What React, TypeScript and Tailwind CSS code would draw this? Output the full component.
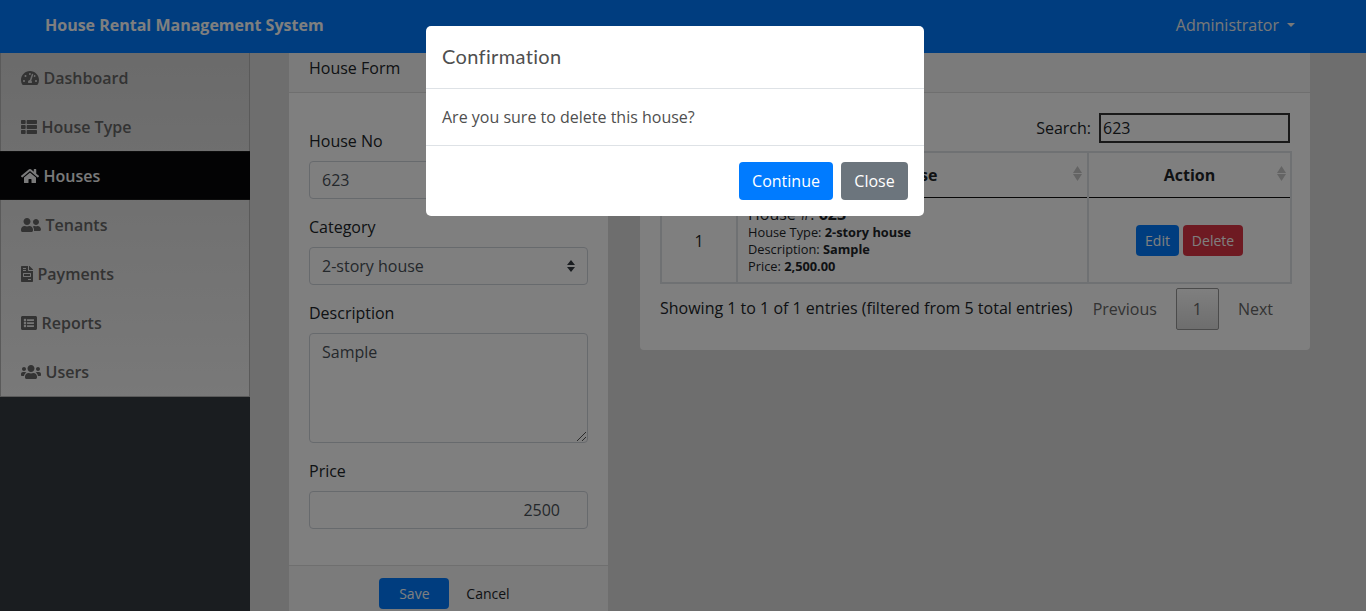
import { FaTachometerAlt, FaThList, FaHome, FaUserFriends, FaFileInvoice, FaListAlt, FaUsers } from 'react-icons/fa';

const menuItems = [
  { icon: FaTachometerAlt, label: 'Dashboard', size: 'h-[16px] w-[18px]', active: false },
  { icon: FaThList, label: 'House Type', size: 'h-[16px] w-[16px]', active: false },
  { icon: FaHome, label: 'Houses', size: 'h-[16px] w-[18px]', active: true },
  { icon: FaUserFriends, label: 'Tenants', size: 'h-[16px] w-[20px]', active: false },
  { icon: FaFileInvoice, label: 'Payments', size: 'h-[16px] w-[12px]', active: false },
  { icon: FaListAlt, label: 'Reports', size: 'h-[16px] w-[16px]', active: false },
  { icon: FaUsers, label: 'Users', size: 'h-[16px] w-[20px]', active: false },
];

function SortIcon() {
  return (
    <span className="flex flex-col items-center text-[#c8c8c8] leading-none">
      <svg width="9" height="7" viewBox="0 0 9 7"><path d="M4.5 0L9 7H0z" fill="currentColor" /></svg>
      <svg width="9" height="7" viewBox="0 0 9 7" className="mt-[1px]"><path d="M4.5 7L0 0h9z" fill="currentColor" /></svg>
    </span>
  );
}

export default function App() {
  return (
    <div className="relative h-[611px] overflow-hidden bg-[#dcdcdc] font-['Open_Sans',sans-serif] text-[16px] text-[#212529]">
      {/* Navbar */}
      <nav className="flex h-[53px] items-center justify-between bg-[#007bff] pb-[4px] pl-[45px] pr-[71px] text-white">
        <span className="font-bold">House Rental Management System</span>
        <span className="flex items-center gap-[8px] text-[16px] text-[#f0f0f0]">
          Administrator
          <span className="h-0 w-0 border-x-[4.8px] border-t-[4.8px] border-x-transparent border-t-[#f0f0f0]" />
        </span>
      </nav>

      <div className="flex h-[558px]">
        {/* Sidebar */}
        <aside className="w-[250px] shrink-0 bg-[#343a40]">
          <ul className="border-b border-[#b4b4b4] bg-gradient-to-b from-[#d6d6d6] to-[#f2f2f2]">
            {menuItems.map((item) => {
              const Icon = item.icon;
              return (
                <li
                  key={item.label}
                  className={
                    item.active
                      ? 'flex h-[49px] items-center gap-[4.5px] border-y border-[#1a1a1a] bg-[#060709] pl-[21px] font-semibold text-[#f4f4f4]'
                      : 'flex h-[49px] items-center gap-[4.5px] border-x border-[#b4b4b4] pl-[20px] font-semibold text-[#666]'
                  }
                >
                  <Icon className={item.size} />
                  <span>{item.label}</span>
                </li>
              );
            })}
          </ul>
        </aside>

        {/* Main */}
        <main className="flex flex-1 items-start gap-[32px] pl-[39px]">
          {/* Form card */}
          <div className="flex w-[319px] flex-col rounded-b bg-white">
            <div className="border-b border-[#dfdfdf] bg-[#f7f7f7] px-[20px] pb-[12px] pt-[3px]">House Form</div>
            <div className="flex flex-col px-[20px] pt-[36px] pb-[36px]">
              <label className="mb-[8px]">House No</label>
              <div className="mb-[16px] flex h-[38px] items-center rounded border border-[#ced4da] px-[12px] text-[#495057]">623</div>
              <label className="mb-[8px]">Category</label>
              <div className="mb-[16px] flex h-[38px] items-center justify-between rounded border border-[#ced4da] px-[12px] text-[#495057]">
                2-story house
                <svg width="8" height="12" viewBox="0 0 8 12"><path d="M4 0l4 5H0zM4 12L0 7h8z" fill="#343a40" /></svg>
              </div>
              <label className="mb-[8px]">Description</label>
              <div className="relative mb-[16px] h-[110px] rounded border border-[#ced4da] px-[12px] py-[6px] text-[#495057]">
                Sample
                <svg width="10" height="10" viewBox="0 0 10 10" className="absolute bottom-[1px] right-[1px]">
                  <path d="M1 10L10 1M6 10l4-4" stroke="#555" strokeWidth="1" fill="none" />
                </svg>
              </div>
              <label className="mb-[8px]">Price</label>
              <div className="flex h-[38px] items-center justify-end rounded border border-[#ced4da] pr-[27px] text-[#495057]">2500</div>
            </div>
            <div className="flex items-start justify-center gap-[17px] border-t border-[#dfdfdf] bg-[#f7f7f7] py-[12px] text-[14px]">
              <span className="flex h-[31px] w-[70px] items-center justify-center rounded bg-[#007bff] text-white">Save</span>
              <span className="flex h-[31px] items-center pr-[8px] text-[#212529]">Cancel</span>
            </div>
          </div>

          {/* List card */}
          <div className="flex w-[670px] flex-col rounded-b bg-white">
            <div className="h-[40px] border-b border-[#dfdfdf] bg-[#f7f7f7]" />
            <div className="flex flex-col px-[20px] pb-[20px] pt-[20px]">
              <div className="mb-[8px] flex h-[30px] items-center justify-end gap-[8px]">
                <span>Search:</span>
                <div className="flex h-[30px] w-[191px] items-center border-2 border-[#333] px-[2px] text-[#212529]">623</div>
              </div>
              <table className="w-[632px] table-fixed border-collapse border-2 border-[#dee2e6]">
                <thead>
                  <tr className="h-[45px] border-b border-[#111]">
                    <th className="w-[76px] border-x-2 border-[#dee2e6]">#</th>
                    <th className="w-[351px] border-x-2 border-[#dee2e6]">
                      <div className="relative flex justify-center">
                        House
                        <span className="absolute right-[5px] top-[3px]"><SortIcon /></span>
                      </div>
                    </th>
                    <th className="border-x-2 border-[#dee2e6]">
                      <div className="relative flex justify-center">
                        Action
                        <span className="absolute right-[4px] top-[3px]"><SortIcon /></span>
                      </div>
                    </th>
                  </tr>
                </thead>
                <tbody>
                  <tr className="h-[86px] border-b border-[#111]">
                    <td className="border-x-2 border-[#dee2e6] pt-[2px] text-center">1</td>
                    <td className="border-x-2 border-[#dee2e6] pl-[10px] align-middle">
                      <p className="leading-[20px]">House #: <b>623</b></p>
                      <p className="text-[12.8px] leading-[17px]">House Type: <b>2-story house</b></p>
                      <p className="text-[12.8px] leading-[17px]">Description: <b>Sample</b></p>
                      <p className="text-[12.8px] leading-[17px]">Price: <b>2,500.00</b></p>
                    </td>
                    <td className="border-x-2 border-[#dee2e6] pt-[2px]">
                      <div className="flex justify-center gap-[4px] text-[14px] text-white">
                        <span className="flex h-[31px] w-[43px] items-center justify-center rounded bg-[#007bff]">Edit</span>
                        <span className="flex h-[31px] w-[60px] items-center justify-center rounded bg-[#dc3545]">Delete</span>
                      </div>
                    </td>
                  </tr>
                </tbody>
              </table>
              <div className="mt-[4px] flex items-center justify-between">
                <span className="mb-[2px]">Showing 1 to 1 of 1 entries (filtered from 5 total entries)</span>
                <div className="flex items-center text-[#666]">
                  <span className="px-[19px]">Previous</span>
                  <span className="flex h-[42px] w-[43px] items-center justify-center rounded-[2px] border border-[#979797] bg-gradient-to-b from-white to-[#dcdcdc]">1</span>
                  <span className="pl-[19px] pr-[17px]">Next</span>
                </div>
              </div>
            </div>
          </div>
        </main>
      </div>

      {/* Backdrop and modal */}
      <div className="absolute inset-0 bg-black/50" />
      <div className="absolute left-[426px] top-[26px] w-[498px] rounded-[5px] bg-white text-[#4f4f4f]">
        <div className="flex h-[63px] items-center border-b border-[#dee2e6] pb-[2px] pl-[16px] font-['Lato',sans-serif] text-[20px] tracking-[0.35px]">Confirmation</div>
        <div className="flex h-[57px] items-center border-b border-[#dee2e6] px-[16px]">Are you sure to delete this house?</div>
        <div className="flex h-[70px] items-start justify-end gap-[8px] pr-[16px] pt-[16px]">
          <span className="flex h-[38px] w-[94px] items-center justify-center rounded bg-[#007bff] text-white">Continue</span>
          <span className="flex h-[38px] w-[67px] items-center justify-center rounded bg-[#6c757d] text-white">Close</span>
        </div>
      </div>
    </div>
  );
}
